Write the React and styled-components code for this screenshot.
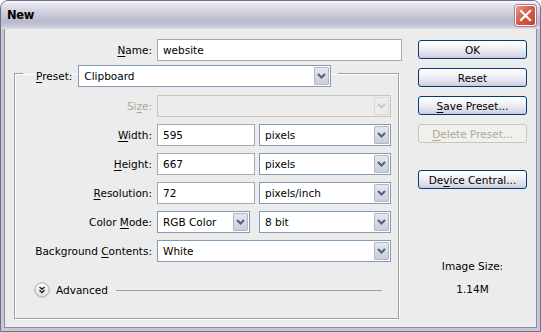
import React from "react";
import styled, { createGlobalStyle } from "styled-components";

const GlobalStyle = createGlobalStyle`
  html, body {
    margin: 0;
    padding: 0;
    background: #ffffff;
  }
  body {
    font-family: "DejaVu Sans", "Liberation Sans", sans-serif;
    font-size: 10.5px;
    color: #000;
  }
`;

const Window = styled.div`
  width: 541px;
  height: 332px;
  box-sizing: border-box;
  display: flex;
  flex-direction: column;
  border-radius: 8px 8px 0 0;
  border: 1px solid #6f6f8a;
  background: #c7c7d6;
  overflow: hidden;
`;

const TitleBar = styled.div`
  height: 28px;
  flex: none;
  display: flex;
  align-items: center;
  justify-content: space-between;
  padding: 0 4px 0 6px;
  background: linear-gradient(
    #fdfdfe 0%,
    #e6e6ef 10%,
    #d0d0de 40%,
    #b8b9ce 72%,
    #c3c4d6 88%,
    #dddde7 100%
  );
`;

const Title = styled.span`
  font-family: "DejaVu Sans", sans-serif;
  font-weight: bold;
  font-size: 11.5px;
  color: #000;
  letter-spacing: -0.3px;
`;

const CloseButton = styled.div`
  width: 19px;
  height: 19px;
  border: 1px solid #ffffff;
  border-radius: 3px;
  display: flex;
  align-items: center;
  justify-content: center;
  background: linear-gradient(135deg, #e79a88 0%, #d45f4c 45%, #c14631 100%);
  box-shadow: 0 0 0 1px #b6778a;
`;

const Body = styled.div`
  flex: 1;
  display: flex;
  margin: 0 3px 3px 3px;
  padding-top: 10px;
  background: #ececec;
  box-shadow: inset 1px 0 0 #8d8da6, inset -1px 0 0 #8d8da6, inset 0 -1px 0 #8d8da6;
`;

const FormColumn = styled.div`
  width: 388px;
  margin-left: 10px;
  display: flex;
  flex-direction: column;
`;

const FieldRow = styled.div`
  display: grid;
  grid-template-columns: ${(p) => p.$labelWidth}px 1fr;
  column-gap: 5px;
  align-items: center;
  height: 22px;
`;

const Label = styled.span`
  text-align: right;
  white-space: nowrap;
  color: ${(p) => (p.$disabled ? "#aca899" : "#000")};
  u {
    text-decoration: underline;
    text-underline-offset: 2px;
  }
`;

const Fields = styled.div`
  display: flex;
  gap: ${(p) => p.$gap || 4}px;
  height: 22px;
`;

const TextField = styled.div`
  width: ${(p) => p.$width}px;
  height: 22px;
  box-sizing: border-box;
  border: 1px solid #a5a9ae;
  background: #fff;
  padding: 0 5px;
  display: flex;
  align-items: center;
`;

const Combo = styled.div`
  width: ${(p) => p.$width}px;
  height: 22px;
  box-sizing: border-box;
  border: 1px solid ${(p) => (p.$disabled ? "#c9c7ba" : "#7f9db9")};
  background: ${(p) => (p.$disabled ? "#ececec" : "#fff")};
  display: flex;
  align-items: stretch;
  padding: 1px;
`;

const ComboText = styled.span`
  flex: 1;
  padding-left: 4px;
  display: flex;
  align-items: center;
  white-space: nowrap;
`;

const ArrowButton = styled.span`
  width: 15px;
  box-sizing: border-box;
  border: 1px solid ${(p) => (p.$disabled ? "#dcdcd6" : "#b4b6c8")};
  border-radius: 1px;
  background: ${(p) =>
    p.$disabled
      ? "#ececec"
      : "linear-gradient(#e6e7ef, #cbcdda)"};
  display: flex;
  align-items: center;
  justify-content: center;
`;

const GroupBox = styled.fieldset`
  margin: -2px 0 0 0;
  width: 385px;
  box-sizing: border-box;
  padding: 0 0 20px 0;
  border: 1px solid #a0a0a0;
  box-shadow: 1px 1px 0 #fff, inset 1px 1px 0 #fff;
  min-width: 0;
`;

const Legend = styled.legend`
  margin-left: 8px;
  padding: 6px 7px 0 13px;
  display: flex;
  align-items: center;
  gap: 6px;
`;

const Rows = styled.div`
  margin-top: 8px;
  display: flex;
  flex-direction: column;
  gap: 7px;
`;

const AdvancedRow = styled.div`
  margin: 20px 16px 0 19px;
  display: flex;
  align-items: center;
  height: 16px;
`;

const AdvancedText = styled.span`
  margin-left: 6px;
`;

const Rule = styled.div`
  flex: 1;
  height: 1px;
  margin-left: 8px;
  background: #a0a0a0;
`;

const SideColumn = styled.div`
  width: 109px;
  margin-left: 16px;
  padding-top: 1px;
  display: flex;
  flex-direction: column;
  align-items: stretch;
`;

const Button = styled.div`
  height: 19px;
  box-sizing: border-box;
  margin-bottom: ${(p) => p.$gapAfter ?? 9}px;
  border: 1px solid ${(p) => (p.$disabled ? "#c9c7ba" : "#003c74")};
  border-radius: 3px;
  background: ${(p) =>
    p.$disabled
      ? "#f0f0ec"
      : "linear-gradient(#ffffff 0%, #f4f4f8 35%, #dcdce8 80%, #c9c9dc 100%)"};
  color: ${(p) => (p.$disabled ? "#aca899" : "#000")};
  display: flex;
  align-items: center;
  justify-content: center;
  white-space: nowrap;
  u {
    text-underline-offset: 2px;
  }
`;

const InfoText = styled.div`
  text-align: center;
  margin-top: ${(p) => p.$top}px;
`;

const Chevron = ({ disabled }) => (
  <svg width="9" height="6" viewBox="0 0 9 6">
    <polyline
      points="1,1 4.5,4.5 8,1"
      fill="none"
      stroke={disabled ? "#c8c8c8" : "#4d6185"}
      strokeWidth="2"
    />
  </svg>
);

const ComboBox = ({ width, value, disabled }) => (
  <Combo $width={width} $disabled={disabled}>
    <ComboText>{value}</ComboText>
    <ArrowButton $disabled={disabled}>
      <Chevron disabled={disabled} />
    </ArrowButton>
  </Combo>
);

const AdvancedIcon = () => (
  <svg width="16" height="16" viewBox="0 0 16 16">
    <defs>
      <linearGradient id="advBg" x1="0" y1="0" x2="0" y2="1">
        <stop offset="0" stopColor="#ffffff" />
        <stop offset="1" stopColor="#dcdcdc" />
      </linearGradient>
    </defs>
    <circle cx="8" cy="8" r="7.2" fill="url(#advBg)" stroke="#a9a9a9" strokeWidth="1" />
    <polyline points="5.5,5 8,7.3 10.5,5" fill="none" stroke="#222" strokeWidth="1.3" />
    <polyline points="5.5,8.3 8,10.6 10.5,8.3" fill="none" stroke="#222" strokeWidth="1.3" />
  </svg>
);

const rows = [
  { label: <>Si<u>z</u>e:</>, disabled: true, fields: [{ kind: "combo", width: 234, value: "", disabled: true }] },
  { label: <><u>W</u>idth:</>, fields: [{ kind: "text", width: 98, value: "595" }, { kind: "combo", width: 132, value: "pixels" }] },
  { label: <><u>H</u>eight:</>, fields: [{ kind: "text", width: 98, value: "667" }, { kind: "combo", width: 132, value: "pixels" }] },
  { label: <><u>R</u>esolution:</>, fields: [{ kind: "text", width: 98, value: "72" }, { kind: "combo", width: 132, value: "pixels/inch" }] },
  { label: <>Color <u>M</u>ode:</>, gap: 9, fields: [{ kind: "combo", width: 93, value: "RGB Color" }, { kind: "combo", width: 132, value: "8 bit" }] },
  { label: <>Background <u>C</u>ontents:</>, fields: [{ kind: "combo", width: 234, value: "White" }] },
];

export default function App() {
  return (
    <>
      <GlobalStyle />
      <Window>
        <TitleBar>
          <Title>New</Title>
          <CloseButton>
            <svg width="13" height="13" viewBox="0 0 13 13">
              <path d="M2 2 L11 11 M11 2 L2 11" stroke="#fff" strokeWidth="2.2" strokeLinecap="square" />
            </svg>
          </CloseButton>
        </TitleBar>
        <Body>
          <FormColumn>
            <FieldRow $labelWidth={138}>
              <Label><u>N</u>ame:</Label>
              <TextField $width={245}>website</TextField>
            </FieldRow>
            <GroupBox>
              <Legend>
                <Label><u>P</u>reset:</Label>
                <ComboBox width={253} value="Clipboard" />
              </Legend>
              <Rows>
                {rows.map((row, i) => (
                  <FieldRow key={i} $labelWidth={137}>
                    <Label $disabled={row.disabled}>{row.label}</Label>
                    <Fields $gap={row.gap}>
                      {row.fields.map((f, j) =>
                        f.kind === "text" ? (
                          <TextField key={j} $width={f.width}>{f.value}</TextField>
                        ) : (
                          <ComboBox key={j} width={f.width} value={f.value} disabled={f.disabled} />
                        )
                      )}
                    </Fields>
                  </FieldRow>
                ))}
              </Rows>
              <AdvancedRow>
                <AdvancedIcon />
                <AdvancedText>Advanced</AdvancedText>
                <Rule />
              </AdvancedRow>
            </GroupBox>
          </FormColumn>
          <SideColumn>
            <Button>OK</Button>
            <Button>Reset</Button>
            <Button><span><u>S</u>ave Preset...</span></Button>
            <Button $disabled $gapAfter={27}><span><u>D</u>elete Preset...</span></Button>
            <Button><span>De<u>v</u>ice Central...</span></Button>
            <InfoText $top={62}>Image Size:</InfoText>
            <InfoText $top={11}>1.14M</InfoText>
          </SideColumn>
        </Body>
      </Window>
    </>
  );
}
